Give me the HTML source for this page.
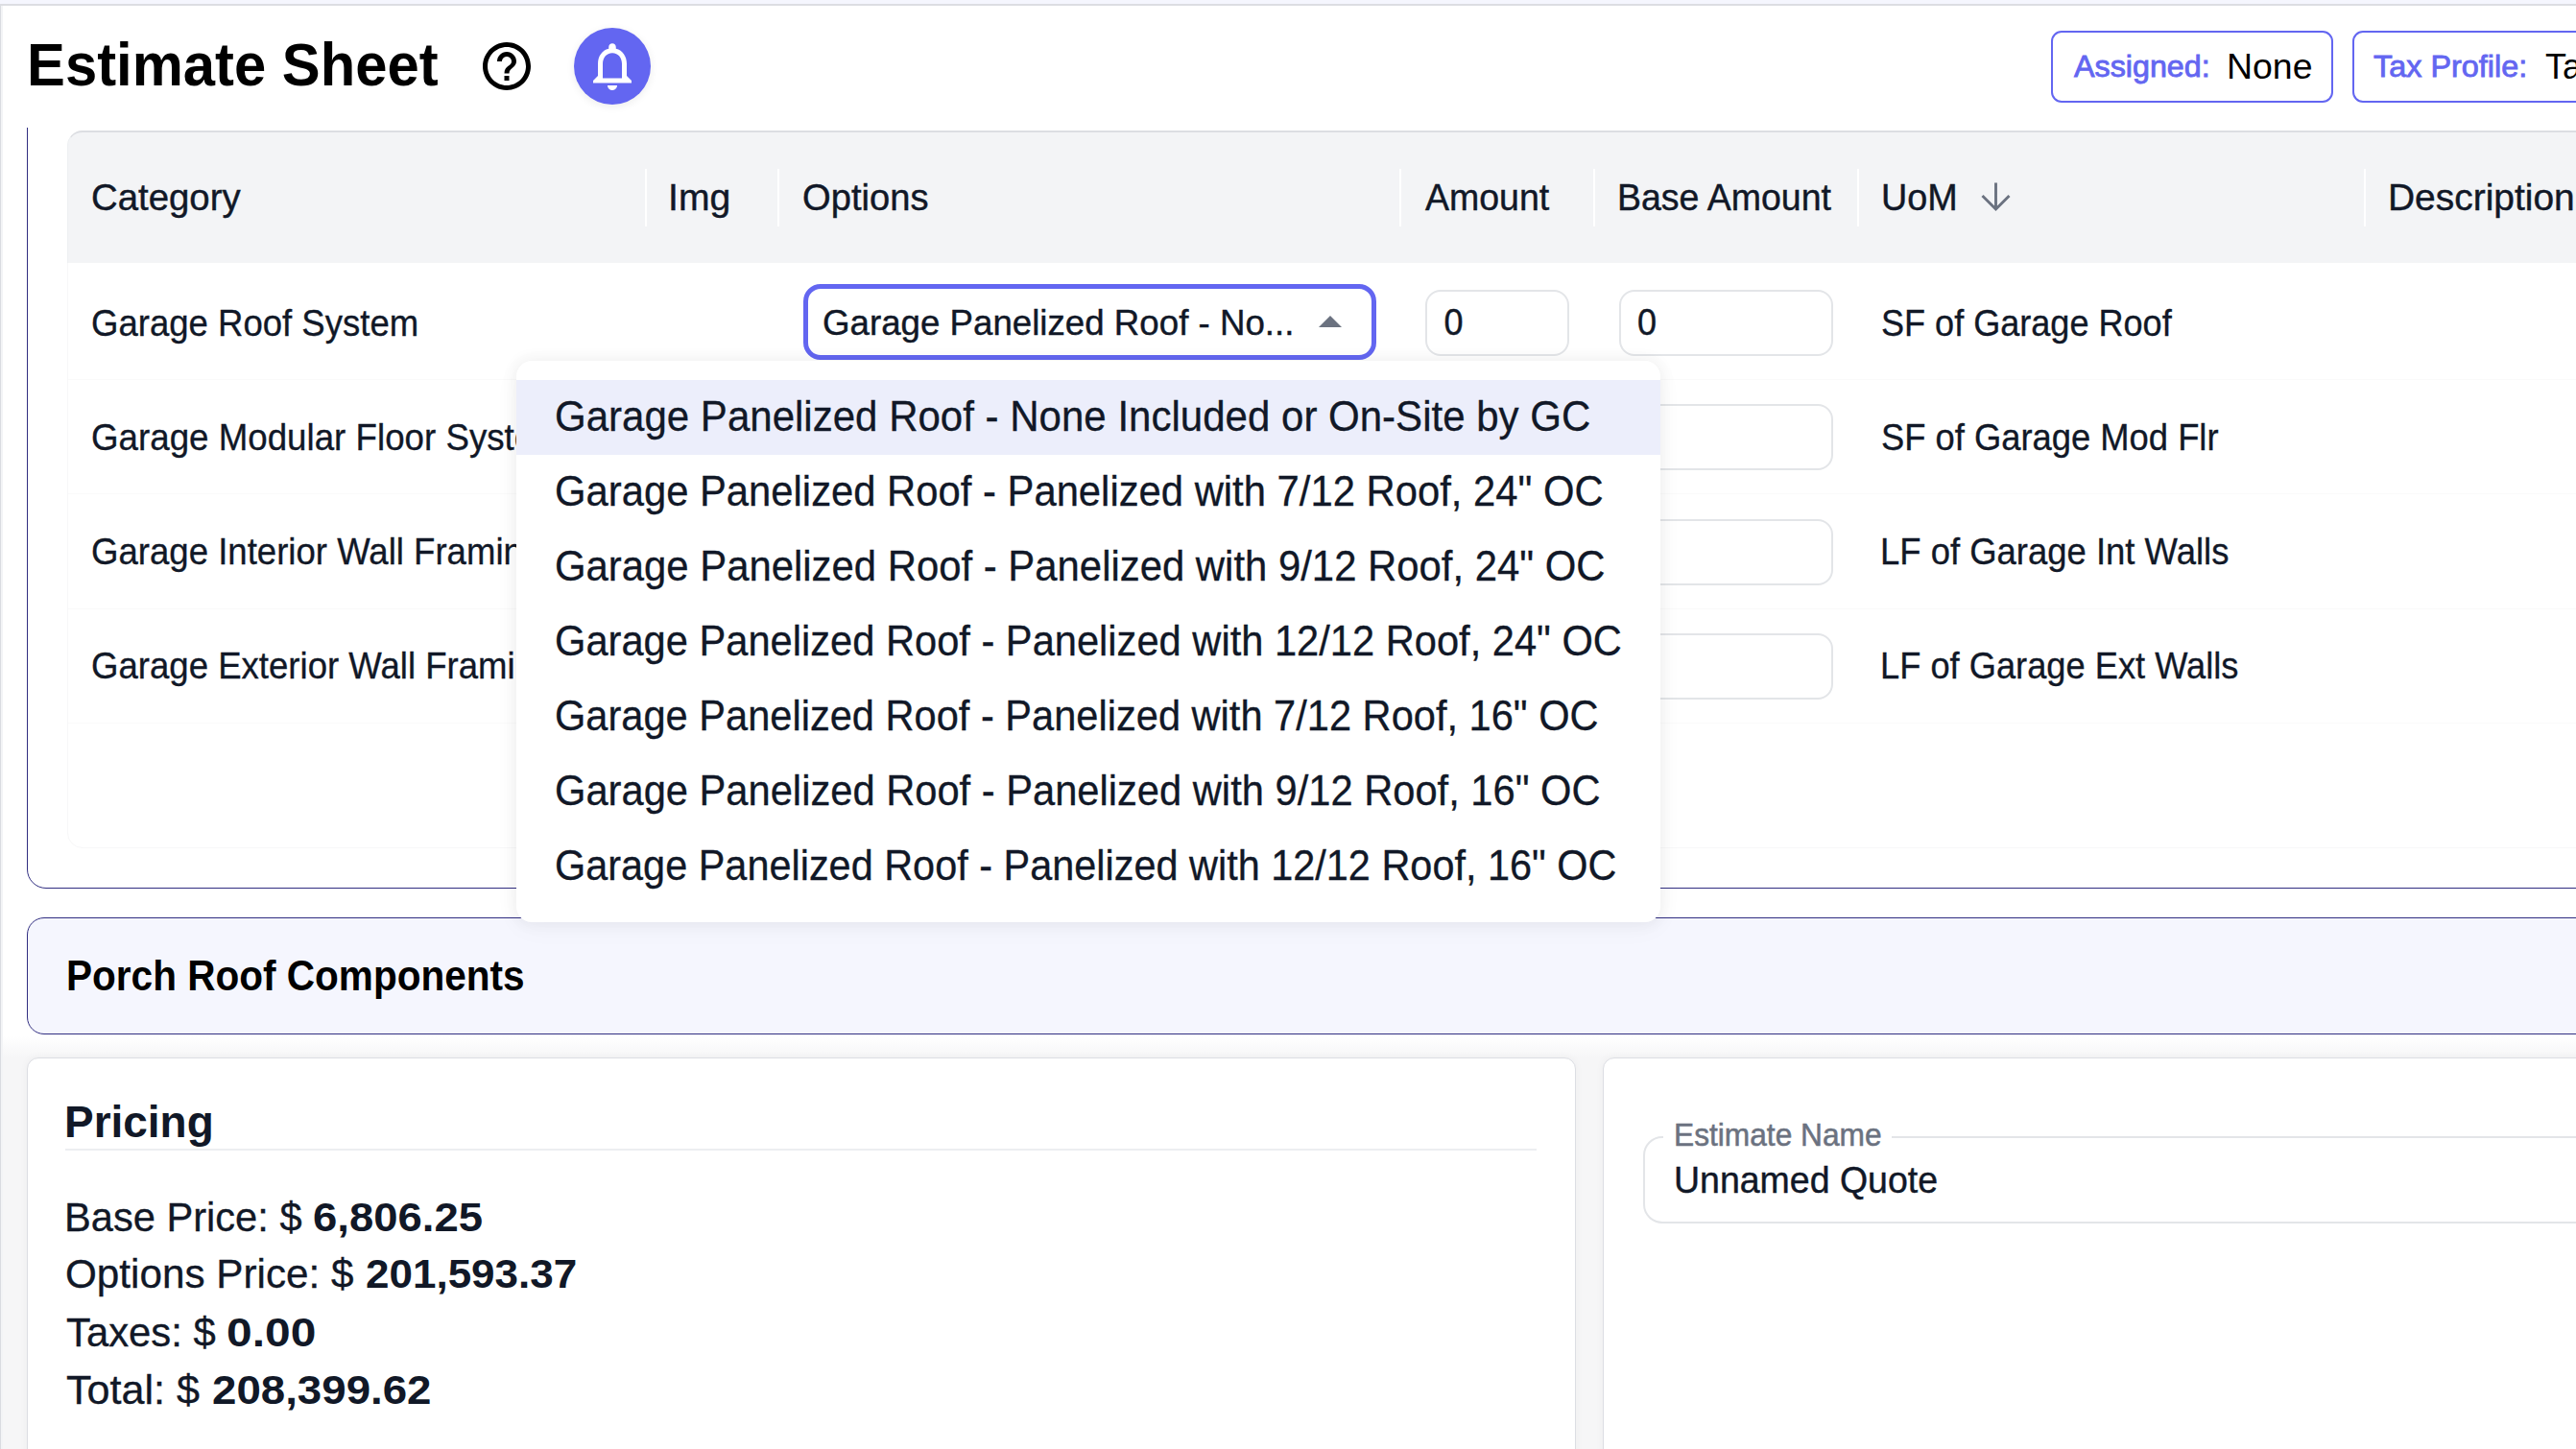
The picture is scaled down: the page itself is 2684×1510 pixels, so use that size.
<!DOCTYPE html>
<html>
<head>
<meta charset="utf-8">
<style>
html,body{margin:0;padding:0;}
body{width:2684px;height:1510px;overflow:hidden;position:relative;background:#fff;font-family:"Liberation Sans",sans-serif;color:#111827;}
.a{position:absolute;box-sizing:border-box;}
.t{position:absolute;white-space:nowrap;line-height:1;font-family:"Liberation Sans",sans-serif;}
</style>
</head>
<body>

<div class="a" style="left:3px;top:1080px;width:2681px;height:430px;background:linear-gradient(#fff,#f6f6f7 22px,#f6f6f7)"></div>
<div class="a" style="left:28px;top:1102px;width:1614px;height:500px;background:#fff;border:1.5px solid #dcdee3;border-radius:12px;box-shadow:0 0 10px rgba(0,0,0,0.04)"></div>
<div class="a" style="left:1670px;top:1102px;width:1100px;height:500px;background:#fff;border:1.5px solid #dcdee3;border-radius:12px;box-shadow:0 0 10px rgba(0,0,0,0.04)"></div>
<div class="t" style="left:66.57px;top:1148.30px;font-size:44px;font-weight:700;color:#111827;transform:scale(1.0441,1.0570);transform-origin:0 37px;">Pricing</div>
<div class="a" style="left:68px;top:1197px;width:1533px;height:2px;background:#eceef1"></div>
<div class="t" style="left:66.68px;top:1249.00px;font-size:40px;font-weight:400;color:#111827;transform:scale(1.0406,1.0570);transform-origin:0 34px;-webkit-text-stroke:0.3px #111827;">Base Price: $</div>
<div class="t" style="left:326.26px;top:1249.00px;font-size:40px;font-weight:700;color:#111827;transform:scale(1.1364,1.0570);transform-origin:0 34px;">6,806.25</div>
<div class="t" style="left:67.69px;top:1308.20px;font-size:40px;font-weight:400;color:#111827;transform:scale(1.0560,1.0570);transform-origin:0 34px;-webkit-text-stroke:0.3px #111827;">Options Price: $</div>
<div class="t" style="left:381.30px;top:1308.20px;font-size:40px;font-weight:700;color:#111827;transform:scale(1.1000,1.0570);transform-origin:0 34px;">201,593.37</div>
<div class="t" style="left:68.75px;top:1368.60px;font-size:40px;font-weight:400;color:#111827;transform:scale(1.0456,1.0570);transform-origin:0 34px;-webkit-text-stroke:0.3px #111827;">Taxes: $</div>
<div class="t" style="left:236.30px;top:1368.60px;font-size:40px;font-weight:700;color:#111827;transform:scale(1.1986,1.0570);transform-origin:0 34px;">0.00</div>
<div class="t" style="left:68.72px;top:1428.80px;font-size:40px;font-weight:400;color:#111827;transform:scale(1.0780,1.0570);transform-origin:0 34px;-webkit-text-stroke:0.3px #111827;">Total: $</div>
<div class="t" style="left:220.86px;top:1428.80px;font-size:40px;font-weight:700;color:#111827;transform:scale(1.1414,1.0570);transform-origin:0 34px;">208,399.62</div>
<div class="a" style="left:1712px;top:1184px;width:1200px;height:91px;border:2px solid #e3e5e8;border-radius:20px"></div>
<div class="a" style="left:1733px;top:1175px;width:238px;height:20px;background:#fff"></div>
<div class="t" style="left:1743.73px;top:1167.60px;font-size:31px;font-weight:400;color:#6b7280;transform:scale(1.0221,1.0570);transform-origin:0 26px;-webkit-text-stroke:0.5px #6b7280;">Estimate Name</div>
<div class="t" style="left:1743.68px;top:1212.90px;font-size:36px;font-weight:400;color:#111827;transform:scale(1.0412,1.0570);transform-origin:0 30px;-webkit-text-stroke:0.4px #111827;">Unnamed Quote</div>
<div class="a" style="left:28px;top:956px;width:2700px;height:122px;background:#f5f6fe;border:1.5px solid #312e81;border-radius:18px"></div>
<div class="t" style="left:69.03px;top:997.60px;font-size:41px;font-weight:700;color:#000;transform:scale(0.9891,1.0700);transform-origin:0 34px;">Porch Roof Components</div>
<div class="a" style="left:28px;top:60px;width:2700px;height:866px;border:1.5px solid #312e81;border-radius:20px"></div>
<div class="a" style="left:70px;top:136px;width:2700px;height:748px;border:1.5px solid #f7f7f8;border-radius:16px"></div>
<div class="a" style="left:70px;top:136px;width:2700px;height:138px;background:#f3f4f6;border-top:2px solid #dcdee2;border-left:1.5px solid #eef0f2;border-radius:16px 0 0 0"></div>
<div class="a" style="left:672px;top:176px;width:2px;height:60px;background:#fff"></div>
<div class="a" style="left:810px;top:176px;width:2px;height:60px;background:#fff"></div>
<div class="a" style="left:1458px;top:176px;width:2px;height:60px;background:#fff"></div>
<div class="a" style="left:1660px;top:176px;width:2px;height:60px;background:#fff"></div>
<div class="a" style="left:1935px;top:176px;width:2px;height:60px;background:#fff"></div>
<div class="a" style="left:2463px;top:176px;width:2px;height:60px;background:#fff"></div>
<div class="t" style="left:94.67px;top:189.40px;font-size:36px;font-weight:400;color:#111827;transform:scale(1.0653,1.0570);transform-origin:0 30px;-webkit-text-stroke:0.4px #111827;">Category</div>
<div class="t" style="left:695.94px;top:189.00px;font-size:36px;font-weight:400;color:#111827;transform:scale(1.0873,1.0570);transform-origin:0 30px;-webkit-text-stroke:0.4px #111827;">Img</div>
<div class="t" style="left:836.48px;top:189.00px;font-size:36px;font-weight:400;color:#111827;transform:scale(1.0595,1.0570);transform-origin:0 30px;-webkit-text-stroke:0.4px #111827;">Options</div>
<div class="t" style="left:1484.80px;top:188.70px;font-size:36px;font-weight:400;color:#111827;transform:scale(1.0419,1.0570);transform-origin:0 30px;-webkit-text-stroke:0.4px #111827;">Amount</div>
<div class="t" style="left:1684.88px;top:188.70px;font-size:36px;font-weight:400;color:#111827;transform:scale(1.0408,1.0570);transform-origin:0 30px;-webkit-text-stroke:0.4px #111827;">Base Amount</div>
<div class="t" style="left:1960.35px;top:189.00px;font-size:36px;font-weight:400;color:#111827;transform:scale(1.0500,1.0570);transform-origin:0 30px;-webkit-text-stroke:0.4px #111827;">UoM</div>
<svg class="a" style="left:2060px;top:186px" width="40" height="40" viewBox="0 0 40 40"><path d="M19.5 4.6V32M5.5 18L19.5 32L33.5 18" fill="none" stroke="#6b7280" stroke-width="2.9"/></svg>
<div class="t" style="left:2487.56px;top:189.00px;font-size:36px;font-weight:400;color:#111827;transform:scale(1.0811,1.0570);transform-origin:0 30px;-webkit-text-stroke:0.4px #111827;">Description</div>
<div class="a" style="left:71px;top:395px;width:2700px;height:1px;background:#fafafa"></div>
<div class="a" style="left:71px;top:514px;width:2700px;height:1px;background:#fafafa"></div>
<div class="a" style="left:71px;top:634px;width:2700px;height:1px;background:#fafafa"></div>
<div class="a" style="left:71px;top:753px;width:2700px;height:1px;background:#fafafa"></div>
<div class="t" style="left:94.97px;top:319.60px;font-size:36px;font-weight:400;color:#111827;transform:scale(1.0150,1.0570);transform-origin:0 30px;-webkit-text-stroke:0.3px #111827;">Garage Roof System</div>
<div class="t" style="left:1960.00px;top:319.60px;font-size:36px;font-weight:400;color:#111827;transform:scale(1.0017,1.0570);transform-origin:0 30px;-webkit-text-stroke:0.3px #111827;">SF of Garage Roof</div>
<div class="a" style="left:1485px;top:302.0px;width:150px;height:69px;border:2px solid #e3e5e8;border-radius:16px;background:#fff"></div>
<div class="a" style="left:1687px;top:302.0px;width:223px;height:69px;border:2px solid #e3e5e8;border-radius:16px;background:#fff"></div>
<div class="t" style="left:94.96px;top:438.80px;font-size:36px;font-weight:400;color:#111827;transform:scale(1.0200,1.0570);transform-origin:0 30px;-webkit-text-stroke:0.3px #111827;">Garage Modular Floor System</div>
<div class="t" style="left:1959.98px;top:438.80px;font-size:36px;font-weight:400;color:#111827;transform:scale(1.0098,1.0570);transform-origin:0 30px;-webkit-text-stroke:0.3px #111827;">SF of Garage Mod Flr</div>
<div class="a" style="left:1485px;top:421.3px;width:150px;height:69px;border:2px solid #e3e5e8;border-radius:16px;background:#fff"></div>
<div class="a" style="left:1687px;top:421.3px;width:223px;height:69px;border:2px solid #e3e5e8;border-radius:16px;background:#fff"></div>
<div class="t" style="left:94.97px;top:558.00px;font-size:36px;font-weight:400;color:#111827;transform:scale(1.0160,1.0570);transform-origin:0 30px;-webkit-text-stroke:0.3px #111827;">Garage Interior Wall Framing</div>
<div class="t" style="left:1958.96px;top:558.00px;font-size:36px;font-weight:400;color:#111827;transform:scale(1.0127,1.0570);transform-origin:0 30px;-webkit-text-stroke:0.3px #111827;">LF of Garage Int Walls</div>
<div class="a" style="left:1485px;top:540.6px;width:150px;height:69px;border:2px solid #e3e5e8;border-radius:16px;background:#fff"></div>
<div class="a" style="left:1687px;top:540.6px;width:223px;height:69px;border:2px solid #e3e5e8;border-radius:16px;background:#fff"></div>
<div class="t" style="left:94.97px;top:677.30px;font-size:36px;font-weight:400;color:#111827;transform:scale(1.0160,1.0570);transform-origin:0 30px;-webkit-text-stroke:0.3px #111827;">Garage Exterior Wall Framing</div>
<div class="t" style="left:1958.98px;top:677.30px;font-size:36px;font-weight:400;color:#111827;transform:scale(1.0071,1.0570);transform-origin:0 30px;-webkit-text-stroke:0.3px #111827;">LF of Garage Ext Walls</div>
<div class="a" style="left:1485px;top:659.9px;width:150px;height:69px;border:2px solid #e3e5e8;border-radius:16px;background:#fff"></div>
<div class="a" style="left:1687px;top:659.9px;width:223px;height:69px;border:2px solid #e3e5e8;border-radius:16px;background:#fff"></div>
<div class="t" style="left:1504.40px;top:319.30px;font-size:36px;font-weight:400;color:#111827;transform:scale(1.0000,1.0570);transform-origin:0 30px;-webkit-text-stroke:0.4px #111827;">0</div>
<div class="t" style="left:1706.00px;top:319.30px;font-size:36px;font-weight:400;color:#111827;transform:scale(1.0000,1.0570);transform-origin:0 30px;-webkit-text-stroke:0.4px #111827;">0</div>
<div class="a" style="left:837px;top:296px;width:597px;height:79px;border:5px solid #6366f1;border-radius:18px;background:#fff"></div>
<div class="t" style="left:856.60px;top:318.50px;font-size:35px;font-weight:400;color:#111827;transform:scale(1.0481,1.0570);transform-origin:0 30px;-webkit-text-stroke:0.4px #111827;">Garage Panelized Roof - No...</div>
<svg class="a" style="left:1372px;top:327px" width="28" height="16" viewBox="0 0 28 16"><path d="M2 14L14 2L26 14Z" fill="#6b7280"/></svg>
<div class="a" style="left:3px;top:6px;width:2681px;height:127px;background:#fff"></div>
<div class="t" style="left:28.11px;top:38.90px;font-size:60px;font-weight:700;color:#000;transform:scale(0.9965,1.0400);transform-origin:0 50px;">Estimate Sheet</div>
<svg class="a" style="left:498px;top:39px" width="60" height="60" viewBox="0 0 24 24"><path d="M11 18h2v-2h-2v2zm1-16C6.48 2 2 6.48 2 12s4.48 10 10 10 10-4.48 10-10S17.52 2 12 2zm0 18c-4.41 0-8-3.59-8-8s3.59-8 8-8 8 3.59 8 8-3.59 8-8 8zm0-14c-2.21 0-4 1.79-4 4h2c0-1.1.9-2 2-2s2 .9 2 2c0 2-3 1.75-3 5h2c0-2.25 3-2.5 3-5 0-2.21-1.79-4-4-4z" fill="#000"/></svg>
<div class="a" style="left:598px;top:29px;width:80px;height:80px;border-radius:50%;background:#6366f1;box-shadow:0 2px 8px rgba(0,0,0,0.08)"></div>
<svg class="a" style="left:608px;top:39px" width="60" height="60" viewBox="0 0 24 24"><path d="M12 22c1.1 0 2-.9 2-2h-4c0 1.1.89 2 2 2zm6-6v-5c0-3.07-1.64-5.64-4.5-6.32V4c0-.83-.67-1.5-1.5-1.5s-1.5.67-1.5 1.5v.68C7.63 5.36 6 7.92 6 11v5l-2 2v1h16v-1l-2-2zm-2 1H8v-6c0-2.48 1.51-4.5 4-4.5s4 2.02 4 4.5v6z" fill="#fff"/></svg>
<div class="a" style="left:2137px;top:32px;width:294px;height:75px;border:2px solid #6366f1;border-radius:11px"></div>
<div class="t" style="left:2160.80px;top:54.80px;font-size:30px;font-weight:400;color:#6366f1;transform:scale(1.0752,1.0200);transform-origin:0 25px;-webkit-text-stroke:0.8px #6366f1;">Assigned:</div>
<div class="t" style="left:2319.88px;top:52.00px;font-size:36px;font-weight:400;color:#000;transform:scale(1.0402,1.0000);transform-origin:0 30px;">None</div>
<div class="a" style="left:2451px;top:32px;width:400px;height:75px;border:2px solid #6366f1;border-radius:11px"></div>
<div class="t" style="left:2472.92px;top:54.80px;font-size:30px;font-weight:400;color:#6366f1;transform:scale(1.0793,1.0200);transform-origin:0 25px;-webkit-text-stroke:0.8px #6366f1;">Tax Profile:</div>
<div class="t" style="left:2652.00px;top:52.00px;font-size:36px;font-weight:400;color:#000;">Ta</div>
<div class="a" style="left:0;top:0;width:2684px;height:4px;background:#f5f6fe"></div>
<div class="a" style="left:0;top:4px;width:2684px;height:2px;background:#dcdde2"></div>
<div class="a" style="left:0;top:6px;width:1px;height:1504px;background:#d9dbe0"></div>
<div class="a" style="left:1px;top:6px;width:2px;height:1504px;background:#f3f4f6"></div>
<div class="a" style="left:538px;top:376px;width:1192px;height:585px;background:#fff;border-radius:16px;box-shadow:0 0 14px 4px rgba(0,0,0,0.045),0 6px 30px rgba(0,0,0,0.03)"></div>
<div class="a" style="left:538px;top:396px;width:1192px;height:78px;background:#eceefb"></div>
<div class="t" style="left:577.60px;top:414.40px;font-size:42px;font-weight:400;color:#111827;transform:scale(1.0007,1.0570);transform-origin:0 35px;-webkit-text-stroke:0.3px #111827;">Garage Panelized Roof - None Included or On-Site by GC</div>
<div class="t" style="left:577.61px;top:492.40px;font-size:42px;font-weight:400;color:#111827;transform:scale(0.9949,1.0570);transform-origin:0 35px;-webkit-text-stroke:0.3px #111827;">Garage Panelized Roof - Panelized with 7/12 Roof, 24" OC</div>
<div class="t" style="left:577.61px;top:570.40px;font-size:42px;font-weight:400;color:#111827;transform:scale(0.9967,1.0570);transform-origin:0 35px;-webkit-text-stroke:0.3px #111827;">Garage Panelized Roof - Panelized with 9/12 Roof, 24" OC</div>
<div class="t" style="left:577.62px;top:648.40px;font-size:42px;font-weight:400;color:#111827;transform:scale(0.9914,1.0570);transform-origin:0 35px;-webkit-text-stroke:0.3px #111827;">Garage Panelized Roof - Panelized with 12/12 Roof, 24" OC</div>
<div class="t" style="left:577.62px;top:726.40px;font-size:42px;font-weight:400;color:#111827;transform:scale(0.9903,1.0570);transform-origin:0 35px;-webkit-text-stroke:0.3px #111827;">Garage Panelized Roof - Panelized with 7/12 Roof, 16" OC</div>
<div class="t" style="left:577.62px;top:804.40px;font-size:42px;font-weight:400;color:#111827;transform:scale(0.9921,1.0570);transform-origin:0 35px;-webkit-text-stroke:0.3px #111827;">Garage Panelized Roof - Panelized with 9/12 Roof, 16" OC</div>
<div class="t" style="left:577.63px;top:882.40px;font-size:42px;font-weight:400;color:#111827;transform:scale(0.9865,1.0570);transform-origin:0 35px;-webkit-text-stroke:0.3px #111827;">Garage Panelized Roof - Panelized with 12/12 Roof, 16" OC</div>
</body>
</html>
